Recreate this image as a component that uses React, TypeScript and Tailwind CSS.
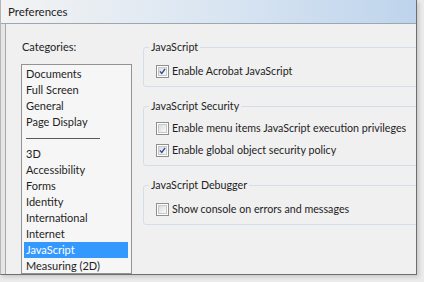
import React from "react";

const categoriesTop = ["Documents", "Full Screen", "General", "Page Display"];
const categoriesBottom = [
  "3D",
  "Accessibility",
  "Forms",
  "Identity",
  "International",
  "Internet",
  "JavaScript",
  "Measuring (2D)",
];

const CheckBox: React.FC<{ checked?: boolean }> = ({ checked }) => {
  return (
    <span className="flex h-[13px] w-[13px] shrink-0 items-center justify-center border border-[#8e8f8f] bg-white p-px">
      <span className="flex h-full w-full items-center justify-center border border-[#c8c8c8] bg-linear-to-br from-[#dcdcdc] to-[#fafafa]">
        {checked && (
          <svg width="9" height="9" viewBox="0 0 9 9">
            <path d="M1.2 4.4 L3.6 7 L7.8 1.2" fill="none" stroke="#2c4790" strokeWidth="1.7" />
          </svg>
        )}
      </span>
    </span>
  );
};

const Option: React.FC<{ label: string; checked?: boolean }> = ({ label, checked }) => {
  return (
    <div className="flex h-4 items-center gap-[3px]">
      <CheckBox checked={checked} />
      <span className="whitespace-nowrap">{label}</span>
    </div>
  );
};

const Group: React.FC<{ title: string; className: string; children: React.ReactNode }> = ({ title, className, children }) => {
  return (
    <fieldset className={"w-[300px] rounded-[3px] border border-[#d3dee8] pl-[5px] " + className}>
      <legend className="h-4 px-[2px] leading-4">{title}</legend>
      <div className="flex flex-col gap-[6px] pl-[7px]">{children}</div>
    </fieldset>
  );
};

export default function App() {
  return (
    <div className="h-[282px] w-[424px] overflow-hidden bg-[#ebebeb] font-['Lato',sans-serif] text-[10.7px] text-[#1e1e1e]">
      <div className="flex h-[275px] w-[417px] flex-col border-r border-b border-l border-[#6e6e6e] border-l-[#b5b5b5] bg-[#e6e6e6] shadow-[2px_2px_4px_rgba(0,0,0,0.15)]">
        <div className="flex h-[24px] shrink-0 items-center border-b border-[#9ba7b3] bg-linear-to-r from-[#f3f3f3] via-[#dbe6f2] to-[#bed4ec] pl-[7px] text-[11.5px]">
          Preferences
        </div>
        <div className="ml-[4px] flex min-h-0 flex-1 overflow-hidden border-l border-[#a9a9a9] bg-[#f0f0f0]">
          <div className="flex w-[137px] shrink-0 flex-col pt-[15px] pl-[15px]">
            <div className="h-4 pl-px text-[11px] leading-4">Categories:</div>
            <div className="mt-[9px] flex min-h-0 w-[111px] flex-1 flex-col overflow-hidden border border-[#939393] bg-[#f6f6f6] pt-px pr-px text-[11px]">
              {categoriesTop.map((c) => (
                <div key={c} className="mx-[2px] h-4 shrink-0 px-[2px] leading-4">
                  {c}
                </div>
              ))}
              <div className="flex h-4 shrink-0 items-center px-[4px]">
                <div className="h-px w-[74px] bg-[#5a5a5a]" />
              </div>
              {categoriesBottom.map((c) => (
                <div
                  key={c}
                  className={
                    c === "JavaScript"
                      ? "mx-[2px] h-4 shrink-0 bg-[#3399ff] px-[2px] leading-4 text-white"
                      : "mx-[2px] h-4 shrink-0 px-[2px] leading-4"
                  }
                >
                  {c}
                </div>
              ))}
            </div>
          </div>
          <div className="flex flex-col gap-[11px] pt-[15px]">
            <Group title="JavaScript" className="pt-[8px] pb-[7px]">
              <Option label="Enable Acrobat JavaScript" checked />
            </Group>
            <Group title="JavaScript Security" className="pt-[6px] pb-[7px]">
              <Option label="Enable menu items JavaScript execution privileges" />
              <Option label="Enable global object security policy" checked />
            </Group>
            <Group title="JavaScript Debugger" className="pt-[8px] pb-[7px]">
              <Option label="Show console on errors and messages" />
            </Group>
          </div>
        </div>
      </div>
    </div>
  );
}
